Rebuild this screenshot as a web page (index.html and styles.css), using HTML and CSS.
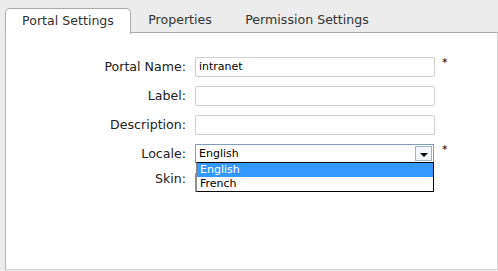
FILE: index.html
```html
<!DOCTYPE html>
<html lang="en">
<head>
    <meta charset="UTF-8">
    <title>Portal Settings</title>
    <link rel="stylesheet" href="styles.css">
</head>
<body>
    <div class="tabs">
        <div class="tab active">Portal Settings</div>
        <div class="tab tab-props">Properties</div>
        <div class="tab tab-perm">Permission Settings</div>
    </div>
    <div class="panel">
        <div class="form">
            <label class="label">Portal Name:</label>
            <div class="input">intranet</div>
            <span class="req">*</span>

            <label class="label">Label:</label>
            <div class="input"></div>
            <span></span>

            <label class="label">Description:</label>
            <div class="input"></div>
            <span></span>

            <label class="label">Locale:</label>
            <div class="select-wrap">
                <div class="select">
                    <span class="select-value">English</span>
                    <span class="select-btn"><span class="arrow"></span></span>
                </div>
                <ul class="options">
                    <li class="selected">English</li>
                    <li>French</li>
                </ul>
            </div>
            <span class="req">*</span>

            <label class="label skin">Skin:</label>
            <div class="select"></div>
            <span></span>
        </div>
    </div>
</body>
</html>
```

FILE: styles.css
```css
body {
    margin: 0;
    background-color: #ececec;
    font-family: 'DejaVu Sans', Verdana, sans-serif;
    font-size: 12.6px;
    color: #222;
}
.tabs {
    display: flex;
    height: 24px;
    padding: 8px 0 0 5px;
}
.tab {
    line-height: 24px;
    text-align: center;
    color: #333;
}
.active {
    width: 124px;
    background-color: white;
    border: 1px solid #ababab;
    border-bottom: none;
    border-radius: 5px 5px 0 0;
    position: relative;
    z-index: 1;
    height: 25px;
}
.tab-props {
    width: 98px;
}
.tab-perm {
    width: 156px;
}
.panel {
    margin-left: 5px;
    width: 491px;
    height: 236px;
    background-color: white;
    border: 1px solid #ababab;
    border-top-color: #a9a9a9;
    border-left-color: #b5b5b5;
    border-right-color: #d0d0d0;
    border-bottom-color: #d0d0d0;
}
.form {
    display: grid;
    grid-template-columns: 180px 240px auto;
    grid-auto-rows: 20px;
    column-gap: 9px;
    row-gap: 9px;
    margin-top: 24px;
}
.label {
    text-align: right;
    line-height: 20px;
}
.skin {
    line-height: 12px;
}
.input {
    box-sizing: border-box;
    height: 20px;
    border: 1px solid #cfcfcf;
    border-radius: 2px;
    padding: 0 3px;
    line-height: 18px;
    font-size: 11px;
    color: #000;
}
.req {
    margin-left: -2px;
    line-height: 12px;
    font-size: 11px;
    color: #000;
}
.select-wrap {
    position: relative;
}
.select {
    box-sizing: border-box;
    display: flex;
    width: 239px;
    height: 19px;
    border: 1px solid #7f9db9;
    background-color: white;
    font-size: 11px;
    color: #000;
}
.select-value {
    flex: 1;
    padding-left: 3px;
    line-height: 17px;
}
.select-btn {
    width: 15px;
    margin: 1px;
    border: 1px solid #9fb2c8;
    background-color: #f3f6fa;
    display: flex;
    align-items: center;
    justify-content: center;
}
.arrow {
    width: 0;
    height: 0;
    margin-top: 2px;
    border-left: 4px solid transparent;
    border-right: 4px solid transparent;
    border-top: 4px solid #000;
}
.options {
    position: absolute;
    top: 18px;
    left: 1px;
    width: 236px;
    margin: 0;
    padding: 0;
    list-style: none;
    background-color: white;
    border: 1px solid #000;
    border-left-color: #888;
    font-size: 11px;
    color: #000;
    z-index: 2;
}
.options li {
    height: 14px;
    line-height: 14px;
    padding-left: 3px;
}
.options .selected {
    background-color: #3399ff;
    color: white;
}
```
